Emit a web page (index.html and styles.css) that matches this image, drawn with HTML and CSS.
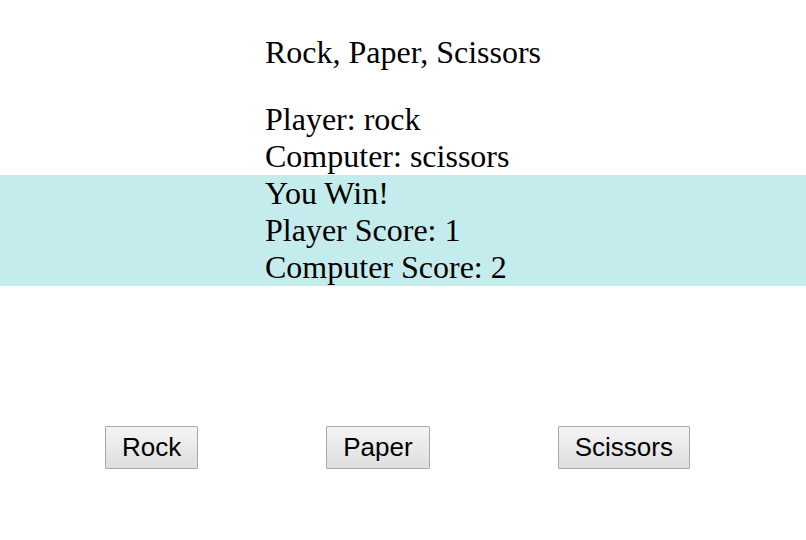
FILE: index.html
```html
<!DOCTYPE html>
<html>
<head>
<meta charset="utf-8">
<link rel="stylesheet" href="styles.css">
</head>
<body>
<div class="title">Rock, Paper, Scissors</div>
<div class="picks">
  <div class="line">Player: rock</div>
  <div class="line">Computer: scissors</div>
</div>
<div class="result">
  <div class="line">You Win!</div>
  <div class="line">Player Score: 1</div>
  <div class="line">Computer Score: 2</div>
</div>
<div class="controls">
  <button class="btn">Rock</button>
  <button class="btn">Paper</button>
  <button class="btn">Scissors</button>
</div>
</body>
</html>
```
FILE: styles.css
```css
html, body {
  margin: 0;
  padding: 0;
  background: #ffffff;
}
body {
  font-family: "Liberation Serif", "Times New Roman", serif;
  font-size: 32px;
  color: #000;
  padding-top: 34px;
}
.title, .line {
  padding-left: 265px;
  line-height: 37px;
  height: 37px;
}
.picks {
  margin-top: 30px;
}
.result {
  background: #c5ecec;
}
.controls {
  display: flex;
  gap: 128px;
  padding-left: 105px;
  margin-top: 140px;
}
.btn {
  font-family: "Liberation Sans", Arial, sans-serif;
  font-size: 26px;
  height: 43px;
  padding: 0 16px;
  border: 1px solid #a9a9a9;
  border-radius: 1px;
  background: linear-gradient(#f4f4f4, #dedede);
  color: #000;
}
```
